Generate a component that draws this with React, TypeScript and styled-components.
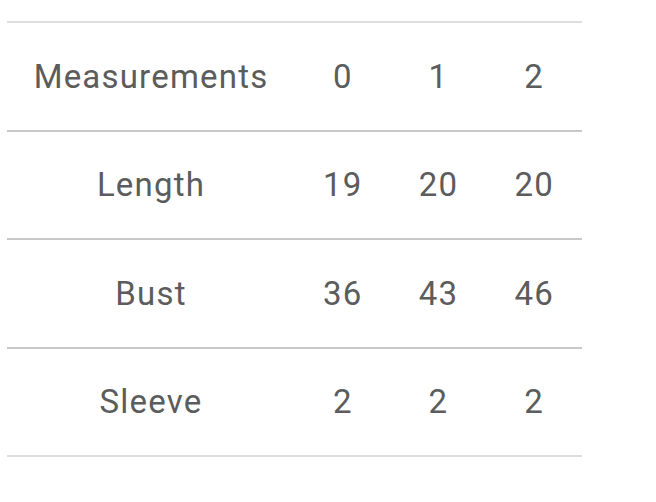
import React from "react";
import styled, { createGlobalStyle } from "styled-components";

const Global = createGlobalStyle`
  html, body { margin: 0; padding: 0; background: #ffffff; }
  body { font-family: Roboto, "Noto Sans", sans-serif; }
`;

const Page = styled.div`
  padding: 21px 0 0 7px;
`;

const Table = styled.table`
  width: 575px;
  border-collapse: collapse;
  table-layout: fixed;
  border-top: 2px solid #dedede;
`;

const Row = styled.tr<{ $last?: boolean }>`
  height: 108.5px;
  border-bottom: 2px solid ${(p) => (p.$last ? "#dedede" : "#c8c8c8")};
`;

const Cell = styled.td<{ $label?: boolean }>`
  width: ${(p) => (p.$label ? "288px" : "auto")};
  padding: 0;
  text-align: center;
  vertical-align: middle;
  font-size: 33px;
  font-weight: 400;
  color: #5c5c5c;
  letter-spacing: 1.2px;
  white-space: nowrap;
`;

const rows: [string, string[]][] = [
  ["Measurements", ["0", "1", "2"]],
  ["Length", ["19", "20", "20"]],
  ["Bust", ["36", "43", "46"]],
  ["Sleeve", ["2", "2", "2"]],
];

export default function App() {
  return (
    <>
      <Global />
      <Page>
        <Table>
          <tbody>
            {rows.map(([label, vals], i) => (
              <Row key={label} $last={i === rows.length - 1}>
                <Cell $label>{label}</Cell>
                {vals.map((v, j) => (
                  <Cell key={j}>{v}</Cell>
                ))}
              </Row>
            ))}
          </tbody>
        </Table>
      </Page>
    </>
  );
}
